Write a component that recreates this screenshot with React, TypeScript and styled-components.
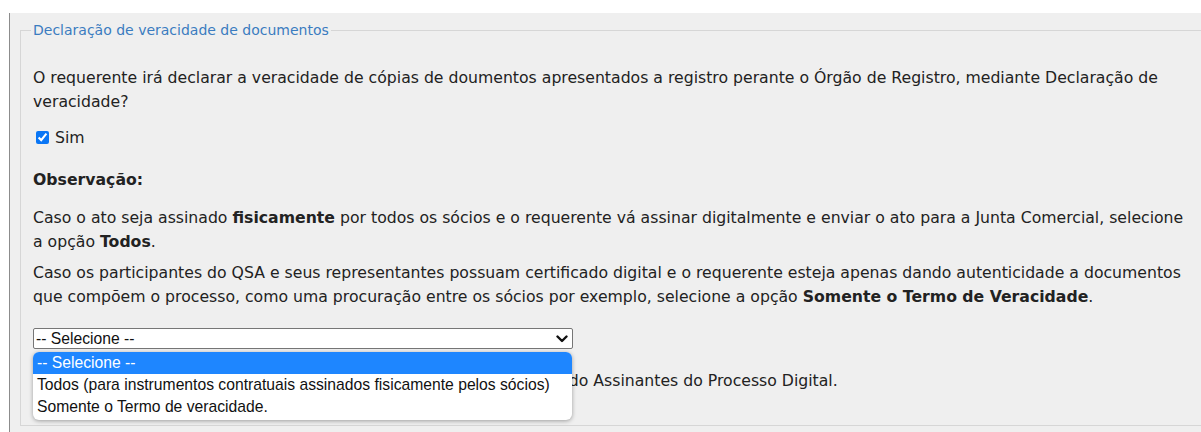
import React from "react";
import styled, { createGlobalStyle } from "styled-components";

const GlobalStyle = createGlobalStyle`
    html, body {
        margin: 0;
        padding: 0;
        background: #ffffff;
        overflow: hidden;
    }
    body {
        font-family: "DejaVu Sans", Verdana, sans-serif;
    }
`;

const Page = styled.div`
    width: 1201px;
    height: 432px;
    padding-top: 13px;
    box-sizing: border-box;
    overflow: hidden;
`;

const Panel = styled.div`
    margin-left: 9px;
    width: 1230px;
    height: 430px;
    background: #efefef;
    border-left: 1px solid #8c8c8c;
    padding: 7px 0 0 10px;
    box-sizing: border-box;
`;

const Group = styled.fieldset`
    margin: 0;
    width: 1186px;
    border: 1px solid #d6d6d6;
    border-right: 0;
    padding: 12px 0 32px 12px;
    box-sizing: border-box;
    color: #222;
    font-size: 15.7px;
    line-height: 24px;
`;

const Legend = styled.legend`
    padding: 0 2px;
    margin-left: -2px;
    font-size: 14px;
    line-height: 20px;
    color: #3b7cc0;
`;

const Paragraph = styled.p<{ $top?: number }>`
    margin: ${(p) => p.$top ?? 0}px 0 0 0;
    width: 1162px;
`;

const CheckRow = styled.label`
    display: flex;
    align-items: center;
    margin-top: 12px;
    height: 23px;
`;

const Check = styled.input`
    margin: 0 6px 0 3px;
    width: 13px;
    height: 13px;
    accent-color: #0a76f5;
`;

const Heading = styled.div`
    margin-top: 19px;
    font-weight: bold;
`;

const SelectWrap = styled.div`
    position: relative;
    margin-top: 19px;
    width: 540px;
    font-family: "Liberation Sans", Arial, sans-serif;
    font-size: 15.7px;
`;

const SelectBox = styled.div`
    height: 21px;
    background: #ffffff;
    border: 1px solid #767676;
    border-radius: 2px;
    box-sizing: border-box;
    display: flex;
    align-items: center;
    justify-content: space-between;
    padding: 0 4px 0 2px;
    line-height: 19px;
    color: #111;
`;

const Options = styled.ul`
    position: absolute;
    left: 0;
    top: 24px;
    width: 539px;
    margin: 0;
    padding: 0 0 2px 0;
    list-style: none;
    background: #ffffff;
    border-radius: 6px;
    box-shadow: 0 1px 4px rgba(0, 0, 0, 0.35);
    overflow: hidden;
    z-index: 2;
`;

const Option = styled.li<{ $active?: boolean }>`
    height: 22px;
    line-height: 22px;
    padding: 0 4px;
    color: ${(p) => (p.$active ? "#ffffff" : "#111")};
    background: ${(p) => (p.$active ? "#1e86ff" : "transparent")};
`;

const Chevron = () => (
    <svg width="12" height="8" viewBox="0 0 12 8">
        <path d="M1.5 1.5 L6 6 L10.5 1.5" fill="none" stroke="#111" strokeWidth="2.4" strokeLinecap="round" strokeLinejoin="round" />
    </svg>
);

const options = [
    "-- Selecione --",
    "Todos (para instrumentos contratuais assinados fisicamente pelos sócios)",
    "Somente o Termo de veracidade.",
];

export default function App() {
    return (
        <Page>
            <GlobalStyle />
            <Panel>
                <Group>
                    <Legend>Declaração de veracidade de documentos</Legend>
                    <Paragraph $top={14}>
                        O requerente irá declarar a veracidade de cópias de doumentos apresentados a registro perante o Órgão de Registro, mediante Declaração de veracidade?
                    </Paragraph>
                    <CheckRow>
                        <Check type="checkbox" defaultChecked />
                        Sim
                    </CheckRow>
                    <Heading>Observação:</Heading>
                    <Paragraph $top={14}>
                        Caso o ato seja assinado <b>fisicamente</b> por todos os sócios e o requerente vá assinar digitalmente e enviar o ato para a Junta Comercial, selecione a opção <b>Todos</b>.
                    </Paragraph>
                    <Paragraph $top={7}>
                        Caso os participantes do QSA e seus representantes possuam certificado digital e o requerente esteja apenas dando autenticidade a documentos que compõem o processo, como uma procuração entre os sócios por exemplo, selecione a opção <b>Somente o Termo de Veracidade</b>.
                    </Paragraph>
                    <SelectWrap>
                        <SelectBox>
                            <span>-- Selecione --</span>
                            <Chevron />
                        </SelectBox>
                        <Options>
                            {options.map((o, i) => (
                                <Option key={o} $active={i === 0}>
                                    {o}
                                </Option>
                            ))}
                        </Options>
                    </SelectWrap>
                    <Paragraph $top={20}>
                        Os sócios que assinarem fisicamente devem ser informados na aba do Assinantes do Processo Digital.
                    </Paragraph>
                </Group>
            </Panel>
        </Page>
    );
}
